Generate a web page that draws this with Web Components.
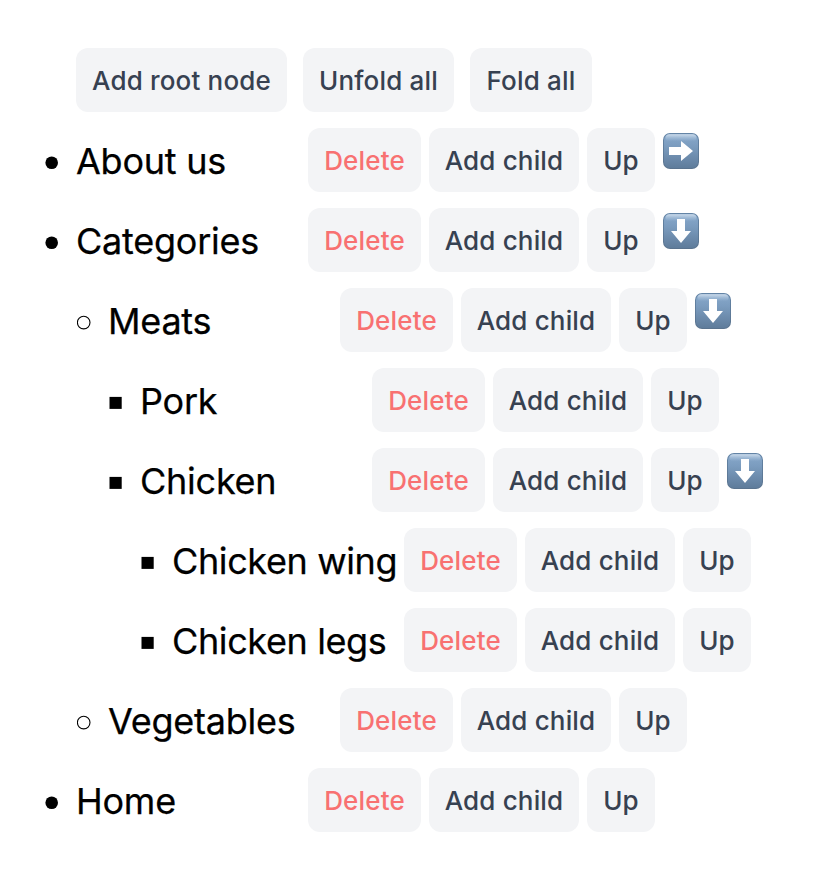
<!DOCTYPE html>
<html lang="en"><head><meta charset="utf-8"><title>Tree</title>
<style>html,body{margin:0;background:#fff}body{font-family:Inter,"Liberation Sans",sans-serif}</style></head>
<body><tree-editor></tree-editor>
<script>
class TreeButton extends HTMLElement{
  constructor(){super();this.attachShadow({mode:'open'}).innerHTML=`<style>
  :host{display:block;flex:none;width:var(--w);height:64px}
  button{all:unset;box-sizing:border-box;width:100%;height:64px;border-radius:12px;background:#f3f4f6;color:#374151;font-size:26px;font-weight:500;letter-spacing:.17px;line-height:66px;text-align:center;white-space:nowrap;display:block}
  :host([danger]) button{color:#f87171}
  </style><button><slot></slot></button>`}
}
customElements.define('tree-button',TreeButton);
class FoldIcon extends HTMLElement{
  constructor(){super();const r=this.getAttribute('dir')==='down'?90:0;
  this.attachShadow({mode:'open'}).innerHTML=`<style>:host{display:block;width:36px;height:36px;margin-top:5px}svg{display:block}</style>
  <svg width="36" height="36" viewBox="0 0 36 36"><defs>
  <linearGradient id="g" x2="0" y2="1"><stop stop-color="#88a9cb"/><stop offset=".35" stop-color="#7b9cbf"/><stop offset="1" stop-color="#5f7c9b"/></linearGradient>
  <linearGradient id="e" x2="0" y2="1"><stop stop-color="#6384a6"/><stop offset="1" stop-color="#5a738e"/></linearGradient>
  <linearGradient id="h" x2="0" y2="1"><stop stop-color="#d3e0ee" stop-opacity=".9"/><stop offset="1" stop-color="#a9c3de" stop-opacity="0"/></linearGradient></defs>
  <rect width="36" height="36" rx="7" fill="url(#e)"/><rect x="1" y="1" width="34" height="34" rx="6" fill="url(#g)"/><rect x="2.500" y="1.300" width="31" height="7" rx="4" fill="url(#h)"/><path transform="rotate(${r} 18 18)" d="M6 14h12V8l12 10-12 10v-6H6z" fill="#fff"/></svg>`}
}
customElements.define('fold-icon',FoldIcon);
class TreeRow extends HTMLElement{
  constructor(){super();const l=+this.getAttribute('level'),fold=this.getAttribute('fold');
  const m=l===0?'<circle cx="6.700" cy="7.800" r="6.300"/>':l===1?'<circle cx="6.700" cy="7.600" r="6.300" fill="none" stroke="#000" stroke-width="1.100"/>':'<rect x=".500" y="1.900" width="12.200" height="12"/>';
  this.attachShadow({mode:'open'}).innerHTML=`<style>
  :host{display:flex;height:64px;padding-left:${45+32*l}px;gap:8px}
  svg.m{flex:none;width:14px;height:15px;margin:27px 9px 0 0}
  .t{width:224px;flex:none;font-size:36px;line-height:66px;letter-spacing:${l===3?-.38:-.24}px;-webkit-text-stroke:.25px #000;white-space:nowrap;color:#000}
  </style><svg class="m" viewBox="0 0 14 15">${m}</svg><span class="t"><slot></slot></span>
  <tree-button danger style="--w:113px">Delete</tree-button><tree-button style="--w:150px">Add child</tree-button><tree-button style="--w:68px">Up</tree-button>${fold?`<fold-icon dir="${fold}"></fold-icon>`:''}`}
}
customElements.define('tree-row',TreeRow);
class TreeEditor extends HTMLElement{
  constructor(){super();this.attachShadow({mode:'open'}).innerHTML=`<style>
  :host{display:flex;flex-direction:column;gap:16px;padding-top:48px}
  nav{display:flex;gap:16px;padding-left:76px}
  </style><nav><tree-button style="--w:211px">Add root node</tree-button><tree-button style="--w:151px">Unfold all</tree-button><tree-button style="--w:122px">Fold all</tree-button></nav>
  ${[['About us',0,'right'],['Categories',0,'down'],['Meats',1,'down'],['Pork',2,''],['Chicken',2,'down'],['Chicken wing',3,''],['Chicken legs',3,''],['Vegetables',1,''],['Home',0,'']].map(([t,l,f])=>`<tree-row level="${l}" fold="${f}">${t}</tree-row>`).join('')}`}
}
customElements.define('tree-editor',TreeEditor);
</script></body></html>
